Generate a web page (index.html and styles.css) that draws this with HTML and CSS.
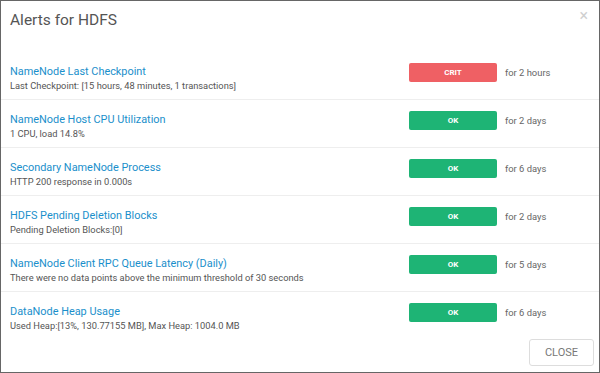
FILE: index.html
```html
<!DOCTYPE html>
<html lang="en">
<head>
    <meta charset="UTF-8">
    <meta name="viewport" content="width=device-width, initial-scale=1.0">
    <title>Alerts for HDFS</title>
    <link rel="stylesheet" href="styles.css">
</head>
<body>

<div class="modal">
    <div class="modal-header">
        <h1>Alerts for HDFS</h1>
        <span class="close-x">&times;</span>
    </div>

    <div class="alert-list">
        <div class="alert-row">
            <div class="alert-info">
                <a class="alert-name" href="#">NameNode Last Checkpoint</a>
                <div class="alert-text">Last Checkpoint: [15 hours, 48 minutes, 1 transactions]</div>
            </div>
            <span class="badge crit">CRIT</span>
            <span class="duration">for 2 hours</span>
        </div>
        <div class="alert-row">
            <div class="alert-info">
                <a class="alert-name" href="#">NameNode Host CPU Utilization</a>
                <div class="alert-text">1 CPU, load 14.8%</div>
            </div>
            <span class="badge ok">OK</span>
            <span class="duration">for 2 days</span>
        </div>
        <div class="alert-row">
            <div class="alert-info">
                <a class="alert-name" href="#">Secondary NameNode Process</a>
                <div class="alert-text">HTTP 200 response in 0.000s</div>
            </div>
            <span class="badge ok">OK</span>
            <span class="duration">for 6 days</span>
        </div>
        <div class="alert-row">
            <div class="alert-info">
                <a class="alert-name" href="#">HDFS Pending Deletion Blocks</a>
                <div class="alert-text">Pending Deletion Blocks:[0]</div>
            </div>
            <span class="badge ok">OK</span>
            <span class="duration">for 2 days</span>
        </div>
        <div class="alert-row">
            <div class="alert-info">
                <a class="alert-name" href="#">NameNode Client RPC Queue Latency (Daily)</a>
                <div class="alert-text">There were no data points above the minimum threshold of 30 seconds</div>
            </div>
            <span class="badge ok">OK</span>
            <span class="duration">for 5 days</span>
        </div>
        <div class="alert-row last">
            <div class="alert-info">
                <a class="alert-name" href="#">DataNode Heap Usage</a>
                <div class="alert-text">Used Heap:[13%, 130.77155 MB], Max Heap: 1004.0 MB</div>
            </div>
            <span class="badge ok">OK</span>
            <span class="duration">for 6 days</span>
        </div>
    </div>

    <div class="modal-footer">
        <button type="button">CLOSE</button>
    </div>
</div>

</body>
</html>
```

FILE: styles.css
```css
html, body {
    height: 100%;
}
body {
    font-family: Roboto, "Liberation Sans", Arial, sans-serif;
    background-color: #fff;
    margin: 0;
}
.modal {
    height: 100%;
    box-sizing: border-box;
    border: 1px solid #666;
    display: flex;
    flex-direction: column;
}
.modal-header {
    height: 51px;
    display: flex;
    justify-content: space-between;
    align-items: flex-start;
    padding: 0 9px;
}
h1 {
    margin: 7px 0 0;
    font-size: 15.5px;
    line-height: 24px;
    font-weight: normal;
    color: #555;
}
.close-x {
    margin-top: 7px;
    margin-right: 2px;
    font-size: 16px;
    line-height: 16px;
    color: #d0d0d0;
}
.alert-row {
    height: 47px;
    border-bottom: 1px solid #eee;
    display: grid;
    grid-template-columns: 1fr 88px 94px;
    column-gap: 8px;
    align-items: start;
    padding-left: 9px;
}
.alert-row.last {
    border-bottom: none;
}
.alert-info {
    padding-top: 13px;
}
.alert-name {
    display: block;
    font-size: 10.9px;
    line-height: 14px;
    color: #1a8fcb;
    text-decoration: none;
}
.alert-text {
    font-size: 9.3px;
    line-height: 14px;
    color: #555;
}
.badge {
    margin-top: 11px;
    height: 19px;
    line-height: 19px;
    border-radius: 2px;
    text-align: center;
    font-size: 8px;
    font-weight: bold;
    color: #fff;
}
.badge.crit {
    background-color: #ef6064;
}
.badge.ok {
    background-color: #1eb475;
}
.duration {
    margin-top: 11px;
    line-height: 19px;
    font-size: 9.4px;
    color: #666;
}
.modal-footer {
    margin-top: auto;
    display: flex;
    justify-content: flex-end;
    padding: 0 5px 6px 0;
}
button {
    width: 65px;
    height: 27px;
    background-color: #fff;
    border: 1px solid #ddd;
    border-radius: 3px;
    font-family: Roboto, "Liberation Sans", Arial, sans-serif;
    font-size: 11px;
    color: #777;
    cursor: pointer;
}
```
